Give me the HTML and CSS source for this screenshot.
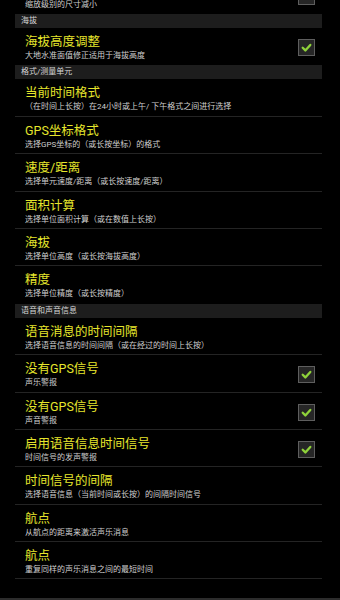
FILE: index.html
```html
<!DOCTYPE html>
<html lang="zh">
<head>
<meta charset="utf-8">
<link rel="stylesheet" href="styles.css">
</head>
<body>
<div class="screen">
  <div class="list">
    <div class="item">
      <div class="text">
        <div class="title">缩放级别</div>
        <div class="sub">缩放级别的尺寸减小</div>
      </div>
      <span class="cb"></span>
    </div>

    <div class="header">海拔</div>
    <div class="item">
      <div class="text">
        <div class="title">海拔高度调整</div>
        <div class="sub">大地水准面值修正适用于海拔高度</div>
      </div>
      <span class="cb"><svg viewBox="0 0 17 17" width="17" height="17"><polyline points="4.2,8.8 7.2,11.8 12.8,5.6" fill="none" stroke="#8fd23a" stroke-width="2.6" stroke-linecap="round" stroke-linejoin="round"/></svg></span>
    </div>

    <div class="header">格式/测量单元</div>
    <div class="item sep">
      <div class="text">
        <div class="title">当前时间格式</div>
        <div class="sub">（在时间上长按）在24小时或上午/ 下午格式之间进行选择</div>
      </div>
    </div>
    <div class="item sep">
      <div class="text">
        <div class="title">GPS坐标格式</div>
        <div class="sub">选择GPS坐标的（或长按坐标）的格式</div>
      </div>
    </div>
    <div class="item sep">
      <div class="text">
        <div class="title">速度/距离</div>
        <div class="sub">选择单元速度/距离（或长按速度/距离）</div>
      </div>
    </div>
    <div class="item sep">
      <div class="text">
        <div class="title">面积计算</div>
        <div class="sub">选择单位面积计算（或在数值上长按）</div>
      </div>
    </div>
    <div class="item sep">
      <div class="text">
        <div class="title">海拔</div>
        <div class="sub">选择单位高度（或长按海拔高度）</div>
      </div>
    </div>
    <div class="item">
      <div class="text">
        <div class="title">精度</div>
        <div class="sub">选择单位精度（或长按精度）</div>
      </div>
    </div>

    <div class="header">语音和声音信息</div>
    <div class="item sep">
      <div class="text">
        <div class="title">语音消息的时间间隔</div>
        <div class="sub">选择语音信息的时间间隔（或在经过的时间上长按）</div>
      </div>
    </div>
    <div class="item sep">
      <div class="text">
        <div class="title">没有GPS信号</div>
        <div class="sub">声乐警报</div>
      </div>
      <span class="cb"><svg viewBox="0 0 17 17" width="17" height="17"><polyline points="4.2,8.8 7.2,11.8 12.8,5.6" fill="none" stroke="#8fd23a" stroke-width="2.6" stroke-linecap="round" stroke-linejoin="round"/></svg></span>
    </div>
    <div class="item sep">
      <div class="text">
        <div class="title">没有GPS信号</div>
        <div class="sub">声音警报</div>
      </div>
      <span class="cb"><svg viewBox="0 0 17 17" width="17" height="17"><polyline points="4.2,8.8 7.2,11.8 12.8,5.6" fill="none" stroke="#8fd23a" stroke-width="2.6" stroke-linecap="round" stroke-linejoin="round"/></svg></span>
    </div>
    <div class="item sep">
      <div class="text">
        <div class="title">启用语音信息时间信号</div>
        <div class="sub">时间信号的发声警报</div>
      </div>
      <span class="cb"><svg viewBox="0 0 17 17" width="17" height="17"><polyline points="4.2,8.8 7.2,11.8 12.8,5.6" fill="none" stroke="#8fd23a" stroke-width="2.6" stroke-linecap="round" stroke-linejoin="round"/></svg></span>
    </div>
    <div class="item sep">
      <div class="text">
        <div class="title">时间信号的间隔</div>
        <div class="sub">选择语音信息（当前时间或长按）的间隔时间信号</div>
      </div>
    </div>
    <div class="item sep">
      <div class="text">
        <div class="title">航点</div>
        <div class="sub">从航点的距离来激活声乐消息</div>
      </div>
    </div>
    <div class="item sep">
      <div class="text">
        <div class="title">航点</div>
        <div class="sub">重复同样的声乐消息之间的最短时间</div>
      </div>
    </div>
  </div>
  <div class="spacer"></div>
  <div class="bottom"></div>
</div>
</body>
</html>
```

FILE: styles.css
```css
html, body {
  margin: 0;
  padding: 0;
  background: #000;
}
body {
  font-family: Roboto, "Noto Sans CJK SC", sans-serif;
}
.screen {
  height: 600px;
  overflow: hidden;
  display: flex;
  flex-direction: column;
}
.list {
  margin: -23.4px 0 0 15px;
  width: 307px;
  display: flex;
  flex-direction: column;
}
.header {
  height: 14px;
  line-height: 14px;
  background: #1d1d1d;
  color: #d6d6d6;
  font-size: 8px;
  padding-left: 6px;
  flex: none;
}
.item {
  height: 37.4px;
  box-sizing: border-box;
  padding: 6px 7px 0 10px;
  display: flex;
  justify-content: space-between;
  align-items: flex-start;
  flex: none;
}
.item.sep {
  border-bottom: 1px solid #242424;
}
.text {
  display: flex;
  flex-direction: column;
  min-width: 0;
}
.title {
  color: #e6e62c;
  font-size: 12.5px;
  line-height: 16px;
  white-space: nowrap;
}
.sub {
  color: #cfcfcf;
  font-size: 8px;
  line-height: 11px;
  white-space: nowrap;
}
.cb {
  width: 17px;
  height: 17px;
  box-sizing: border-box;
  border: 1px solid #5e5e5e;
  background: #262626;
  margin-top: 5px;
  display: flex;
  align-items: center;
  justify-content: center;
  flex: none;
}
.cb svg {
  display: block;
  width: 15px;
  height: 15px;
}
.spacer {
  flex: 1;
}
.bottom {
  height: 2px;
  background: #2c2c2c;
  flex: none;
}
```
